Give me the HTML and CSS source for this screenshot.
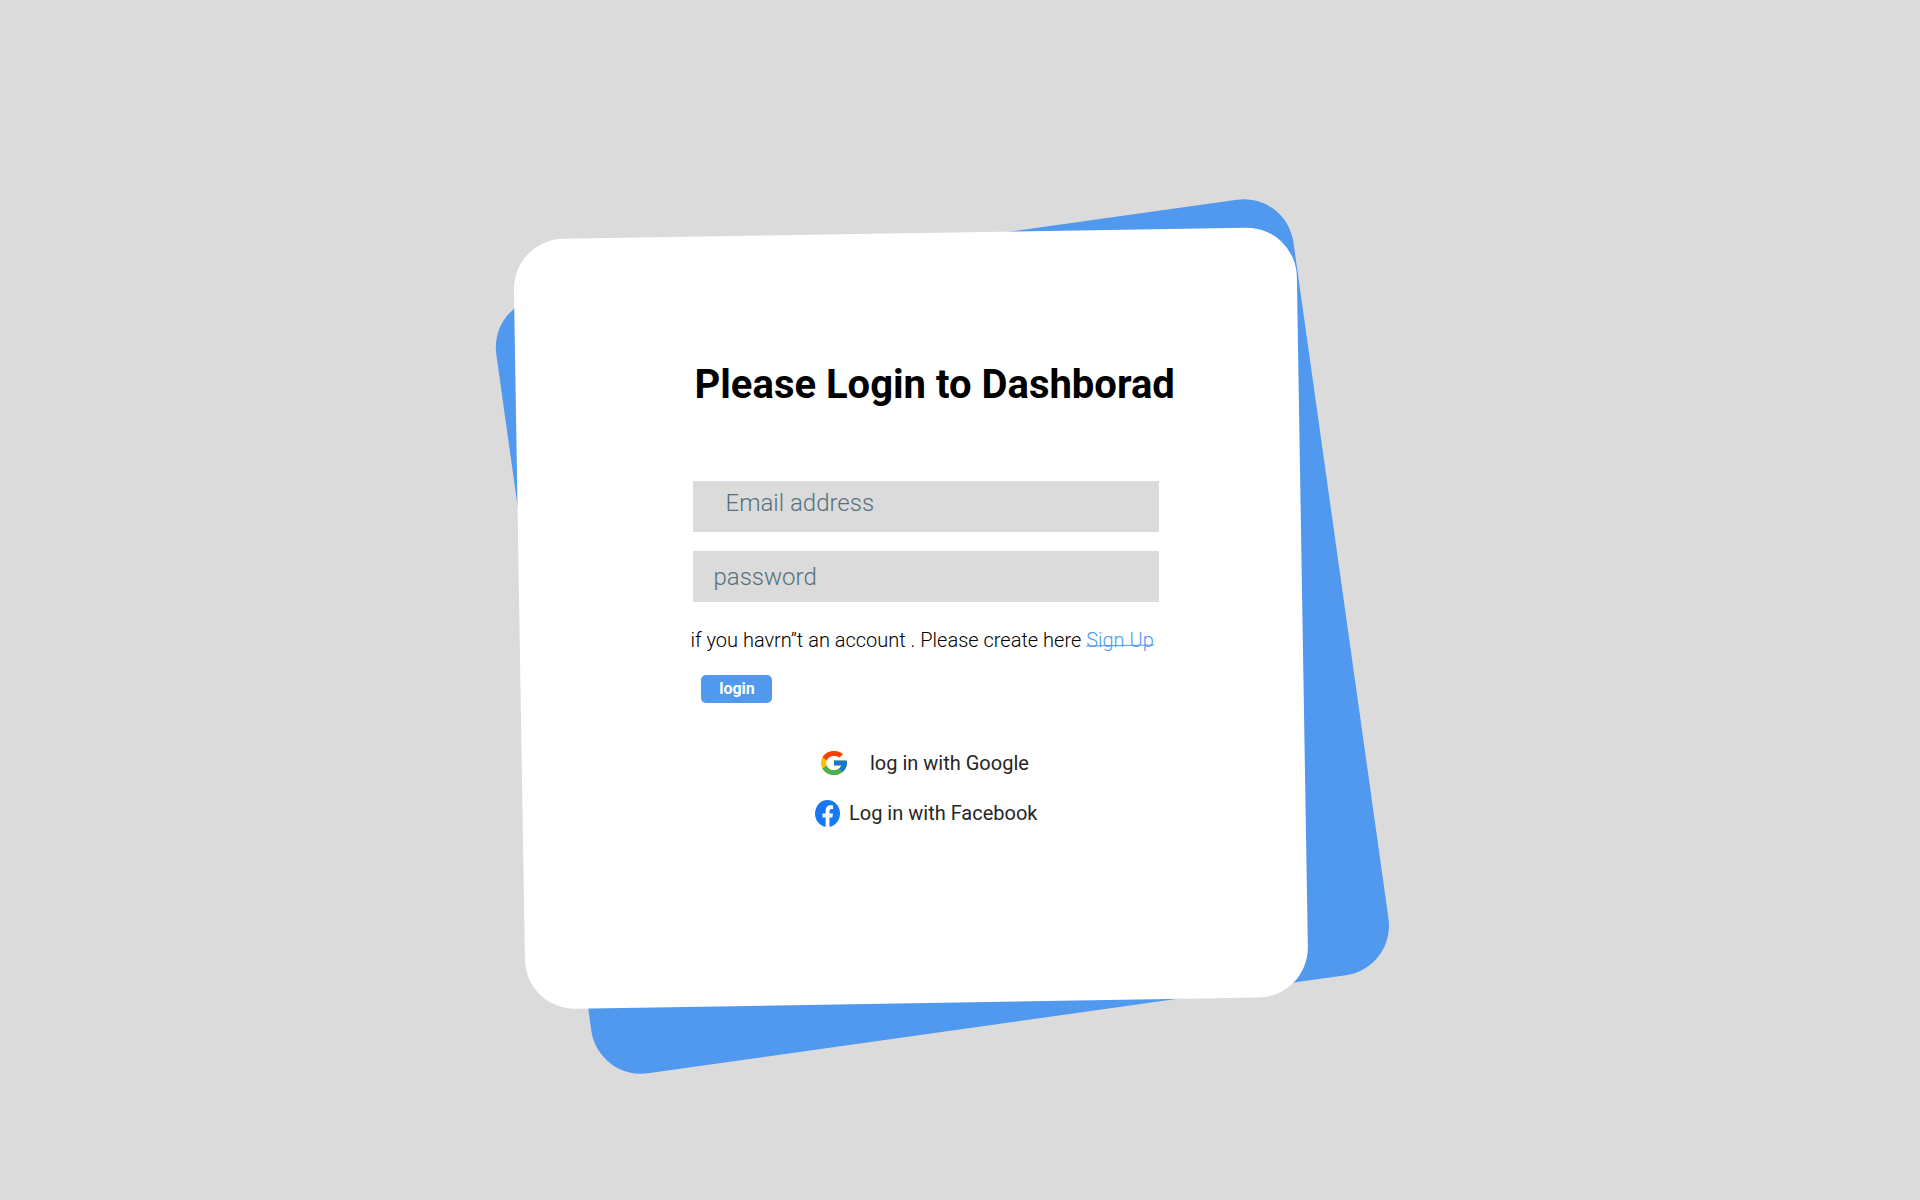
FILE: index.html
```html
<!DOCTYPE html>
<html lang="en">
<head>
<meta charset="utf-8">
<title>Login</title>
<link rel="stylesheet" href="styles.css">
</head>
<body>
<main class="page">
  <div class="backdrop backdrop-blue"></div>
  <div class="backdrop backdrop-white"></div>
  <form class="login">
    <h1 class="title">Please Login to Dashborad</h1>
    <div class="field field-email">Email address</div>
    <div class="field field-password">password</div>
    <p class="note">if you havrn”t an account . Please create here <a class="signup">Sign Up</a></p>
    <button class="submit" type="button">login</button>
    <div class="social google">
      <svg class="icon-google" viewBox="4 4 40 40" preserveAspectRatio="none">
        <path fill="#FFC107" d="M43.600 20H24v8h11.300C33.700 32.700 29.200 36 24 36c-6.600 0-12-5.400-12-12s5.400-12 12-12c3.100 0 5.800 1.200 8 3l5.700-5.700C34 6.100 29.300 4 24 4 13 4 4 13 4 24s9 20 20 20 20-9 20-20c0-1.300-.1-2.700-.4-4z"/>
        <path fill="#FF3D00" d="M6.300 14.700l6.600 4.800C14.700 15.100 19 12 24 12c3.100 0 5.800 1.200 8 3l5.700-5.700C34 6.100 29.300 4 24 4 16.300 4 9.700 8.300 6.300 14.700z"/>
        <path fill="#4CAF50" d="M24 44c5.200 0 9.900-2 13.400-5.200l-6.200-5.200C29.200 35.100 26.700 36 24 36c-5.200 0-9.600-3.300-11.300-7.900l-6.500 5C9.500 39.600 16.200 44 24 44z"/>
        <path fill="#1976D2" d="M43.600 20H24v8h11.300c-.8 2.200-2.200 4.200-4.100 5.600l6.200 5.200C37 39.200 44 34 44 24c0-1.300-.1-2.700-.4-4z"/>
      </svg>
      <span>log in with Google</span>
    </div>
    <div class="social facebook">
      <svg class="icon-facebook" viewBox="0 0 24 24" preserveAspectRatio="none">
        <circle cx="12" cy="12" r="12" fill="#1877F2"/>
        <path fill="#fff" d="M16.700 15.500l.5-3.500h-3.300V9.800c0-.9.500-1.900 2-1.900h1.500v-3s-1.400-.2-2.700-.2c-2.700 0-4.500 1.700-4.500 4.700V12h-3v3.500h3V24h3.700v-8.500z"/>
      </svg>
      <span>Log in with Facebook</span>
    </div>
  </form>
</main>
</body>
</html>
```
FILE: styles.css
```css
body {
  margin: 0;
  background: #dbdbdb;
  font-family: Roboto, "Liberation Sans", sans-serif;
}

.page {
  display: grid;
  width: 1920px;
  height: 1200px;
  overflow: hidden;
}

/* The two tilted cards and the form share one grid cell. */
.backdrop,
.login {
  grid-area: 1 / 1;
  box-sizing: border-box;
}

.backdrop {
  border-radius: 50px;
}

.backdrop-blue {
  width: 805px;
  height: 783px;
  margin: 245px 0 0 540px;
  background: #5099ef;
  transform: translate(-0.1px, 0) rotate(-8deg);
}

.backdrop-white {
  width: 783px;
  height: 770px;
  margin: 233px 0 0 519px;
  background: #fff;
  transform: translate(0.4px, 0.2px) rotate(-0.94deg);
}

.login {
  position: relative;
  display: flex;
  flex-direction: column;
  align-items: flex-start;
  width: 500px;
  margin: 361px 0 0 693px;
}

.title {
  margin: 0 0 72px 1.5px;
  font-size: 40px;
  line-height: 48px;
  font-weight: 700;
  color: #000;
  white-space: nowrap;
}

.field {
  box-sizing: border-box;
  width: 466px;
  height: 51px;
  background: #dbdbdb;
  color: #56717c;
  font-size: 24px;
  line-height: 28px;
  font-weight: 300;
}

.field-email {
  margin-bottom: 19px;
  padding: 8px 0 0 32.5px;
}

.field-password {
  padding: 12px 0 0 20.5px;
}

.note {
  margin: 26px 0 23px -2.5px;
  font-size: 20px;
  line-height: 24px;
  font-weight: 300;
  color: #000;
  white-space: nowrap;
}

.signup {
  position: relative;
  color: #5099ef;
}

.signup::after {
  content: "";
  position: absolute;
  left: 0;
  right: 0;
  top: 17px;
  height: 1px;
  background: #5099ef;
  transform: rotate(-0.94deg);
}

.submit {
  width: 71px;
  height: 28px;
  margin: 0 0 48px 8px;
  padding: 0 0 0 1px;
  border: 0;
  border-radius: 5px;
  background: #5099ef;
  color: #fff;
  font: 700 16px/20px Roboto, sans-serif;
}

.social {
  display: flex;
  align-items: flex-start;
  font-size: 20px;
  line-height: 24px;
  color: #262626;
  white-space: nowrap;
}

.google {
  gap: 23px;
  margin: 0 0 25px 128px;
}

.facebook {
  gap: 9px;
  margin-left: 122px;
  line-height: 26px;
}

.icon-google {
  width: 26px;
  height: 24px;
}

.icon-facebook {
  width: 25px;
  height: 27px;
}
```
